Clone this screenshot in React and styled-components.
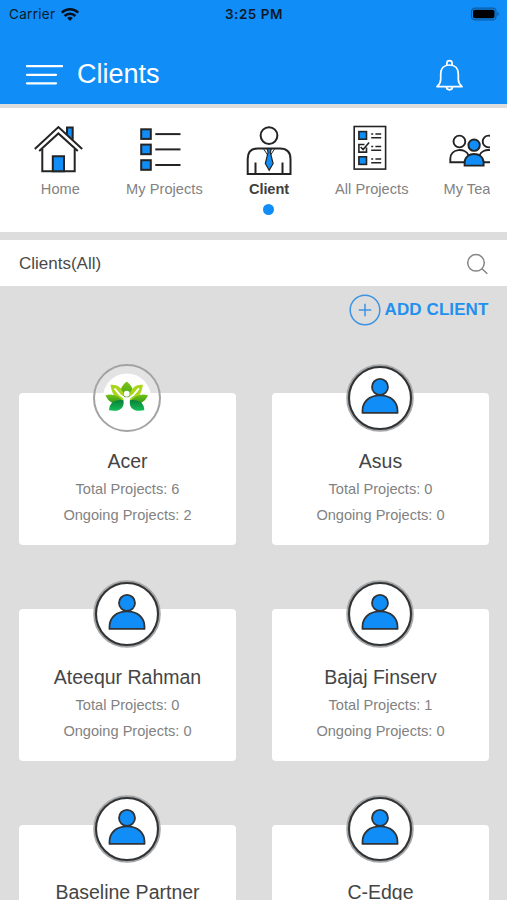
import React from 'react';
import styled, { createGlobalStyle } from 'styled-components';

const BLUE = '#118df7';
const INK = '#242424';

const GlobalStyle = createGlobalStyle`
    * {
        box-sizing: border-box;
    }

    body {
        margin: 0;
        background-color: #dddddd;
        font-family: "Liberation Sans", Arial, sans-serif;
    }
`;

const Screen = styled.div`
    width: 507px;
    height: 900px;
    overflow: hidden;
    background-color: #dddddd;
`;

const Header = styled.header`
    height: 104px;
    background-color: ${BLUE};
`;

const StatusBar = styled.div`
    display: grid;
    grid-template-columns: 1fr auto 1fr;
    align-items: center;
    height: 28px;
    padding: 0 7px 0 9px;
    font-family: Inter, sans-serif;
    font-size: 13.5px;
    line-height: 28px;
    color: #0b1a2a;
`;

const Carrier = styled.div`
    display: flex;
    align-items: center;
    gap: 6px;
    letter-spacing: 0.3px;
`;

const Clock = styled.div`
    padding-right: 1px;
    font-weight: 600;
    letter-spacing: 0.55px;
`;

const Battery = styled.div`
    display: flex;
    justify-content: flex-end;
`;

const TitleBar = styled.div`
    display: flex;
    align-items: center;
    height: 76px;
    padding: 0 43px 0 25px;
`;

const Title = styled.h1`
    flex: 1;
    height: 76px;
    margin: 0 0 0 13px;
    padding-top: 25px;
    font-size: 27px;
    font-weight: normal;
    line-height: 43px;
    color: #fff;
`;

const MenuIcon = styled.svg`
    margin-top: 17px;
`;

const BellIcon = styled.svg`
    margin-top: 18px;
`;

const Tabs = styled.nav`
    display: flex;
    height: 124px;
    margin-top: 4px;
    padding: 17px 17px 0 8px;
    background-color: #fff;
`;

const TabList = styled.div`
    display: flex;
    flex: 1;
    min-width: 0;
    overflow: hidden;
`;

const Tab = styled.div`
    display: flex;
    flex: 0 0 103.8px;
    flex-direction: column;
    align-items: center;
    padding-left: ${props => props.$active ? '3px' : '0'};
`;

const TabLabel = styled.span`
    margin-top: 6px;
    padding-left: ${props => props.$offset > 0 ? props.$offset : 0}px;
    padding-right: ${props => props.$offset < 0 ? -props.$offset : 0}px;
    font-size: 14.6px;
    font-weight: ${props => props.$active ? 'bold' : 'normal'};
    line-height: 17px;
    letter-spacing: ${props => props.$active ? '-0.1px' : '0.05px'};
    white-space: nowrap;
    color: ${props => props.$active ? '#404040' : '#828282'};
`;

const ActiveDot = styled.span`
    width: 11px;
    height: 11px;
    margin-top: 5.5px;
    border-radius: 50%;
    background-color: ${BLUE};
`;

const FilterBar = styled.div`
    display: flex;
    align-items: center;
    justify-content: space-between;
    height: 46px;
    margin-top: 8px;
    padding: 1px 19px 0;
    background-color: #fff;
    font-size: 17px;
    color: #4a4a4a;
`;

const AddClient = styled.div`
    display: flex;
    align-items: center;
    justify-content: flex-end;
    gap: 4px;
    height: 47px;
    padding-right: 18.5px;
    font-size: 17px;
    font-weight: bold;
    letter-spacing: 0.1px;
    color: #2290ee;
`;

const ClientGrid = styled.main`
    display: grid;
    grid-template-columns: 217px 217px;
    column-gap: 36px;
    row-gap: 63.7px;
    padding: 60.3px 18px 0 19px;
`;

const Card = styled.article`
    display: flex;
    flex-direction: column;
    align-items: center;
    height: 152px;
    border-radius: 4px;
    background-color: #fff;
`;

const Avatar = styled.div`
    width: 69px;
    height: 68px;
    flex-shrink: 0;
    margin-top: -29.3px;
`;

const ClientName = styled.h2`
    margin: 17px 0 0;
    font-size: 19.5px;
    font-weight: normal;
    line-height: 24px;
    color: #454545;
`;

const Stats = styled.div`
    display: grid;
    gap: 9px;
    margin-top: 8px;
    text-align: center;
`;

const Stat = styled.p`
    margin: 0;
    font-size: 14.6px;
    line-height: 17px;
    color: #828282;
`;

const HomeIcon = () => (
  <svg width="52" height="50" viewBox="0 0 52 50" fill="none" stroke={INK} strokeWidth="2">
    <path d="M33 9.5V2.4h5.7v12.3" fill={BLUE} />
    <path d="M8.3 24v22.3h32.4V24" />
    <path d="M18.8 46.3v-15H30v15z" fill={BLUE} />
    <path d="M.8 24 24.4 2l23.8 22M5.2 26 24.4 8.4 43.8 26" />
  </svg>
);

const ListIcon = () => (
  <svg width="52" height="50" viewBox="0 0 52 50" stroke={INK} strokeWidth="2">
    {[4.3, 19.6, 35.2].map((y) => (
      <React.Fragment key={y}>
        <rect x="3.2" y={y} width="9.6" height="9.6" fill={BLUE} />
        <path d={`M17.3 ${y + 4.8}h25.2`} />
      </React.Fragment>
    ))}
  </svg>
);

const ClientIcon = () => (
  <svg width="52" height="50" viewBox="0 0 52 50" fill="none" stroke={INK} strokeWidth="2">
    <circle cx="26" cy="10.6" r="8.4" />
    <path d="M4.7 49V34Q4.7 23.400 15 23.400h22Q47.500 23.400 47.500 34v15zM12.500 37.500v11.500M39.500 37.500v11.500" />
    <path d="m20.500 23.800 5.600 8.400 5.600-8.400" strokeWidth="1" />
    <path d="M24.200 24h4l-.9 3.300 2.800 11.200-3.900 6.800-3.900-6.800 2.800-11.200z" fill={BLUE} strokeWidth="1.200" />
  </svg>
);

const ChecklistIcon = () => (
  <svg width="52" height="50" viewBox="0 0 52 50" fill="none" stroke={INK} strokeWidth="1.6">
    <rect x="9.200" y="1.500" width="31.400" height="42.600" />
    <rect x="13.900" y="6.600" width="7.600" height="7.600" fill={BLUE} />
    <path d="M21.500 22.500v4.600h-7.600v-7.600h5.600M15.700 22l2.400 2.600 6-7" />
    <rect x="13.900" y="31.800" width="7.600" height="7.600" fill={BLUE} />
    {[9, 21.5, 34].map((y) => (
      <path key={y} d={`M26.200 ${y}h2M30.400 ${y}h5.800M26.200 ${y + 3.8}h10`} />
    ))}
  </svg>
);

const TeamIcon = () => (
  <svg width="52" height="50" viewBox="0 0 52 50" fill="none" stroke={INK} strokeWidth="1.9">
    <circle cx="10.400" cy="16.500" r="5.900" />
    <path d="M15.500 37.300H1.300v-3.500c0-10.500 15.200-11.500 18.300-3.500M34.400 37.300h14.400v-3.500c0-10.500-15.200-11.500-18.300-3.500" />
    <circle cx="39.600" cy="16.500" r="5.900" />
    <path d="M15.600 40.600v-3c0-11.500 19-11.500 19 0v3z" fill={BLUE} />
    <circle cx="25.100" cy="20.200" r="5.700" fill={BLUE} />
  </svg>
);

const Bell = () => (
  <BellIcon width="29" height="33" viewBox="0 0 29 33" fill="none" stroke="#fff" strokeWidth="1.7">
    <path d="M2 27.700h25c-3-2.800-3.700-4-3.700-7.200V15c0-5.600-3.300-9-8.800-9s-8.800 3.400-8.800 9v5.500c0 3.200-.7 4.400-3.700 7.200z" strokeLinejoin="round" />
    <path d="M11.900 6.300V4.200a2.600 2.600 0 0 1 5.200 0v2.100M11.500 27.800a3 3 0 0 0 6 0" />
  </BellIcon>
);

const Wifi = () => (
  <svg width="18" height="13" viewBox="0 0 18 13" fill="none" stroke="#06111d" strokeWidth="2.6">
    <path d="M.8 4.700a11.600 11.600 0 0 1 16.400 0M3.600 8a7.600 7.600 0 0 1 10.800 0" />
    <path d="m9 13-2.800-2.900a4 4 0 0 1 5.600 0z" fill="#06111d" stroke="none" />
  </svg>
);

const DefaultAvatar = () => (
  <svg width="68" height="68" viewBox="0 0 68 68" stroke="#303437" strokeWidth="1.8">
    <circle cx="34" cy="34" r="32.500" fill="#fff" stroke="#a6a6a6" strokeWidth="2.600" />
    <circle cx="34" cy="34" r="31" fill="#fff" strokeWidth="2.100" />
    <path d="M16.500 48.900v-2.200c0-8.700 6.600-15.300 17.500-15.300s17.500 6.600 17.500 15.300v2.200z" fill={BLUE} strokeLinejoin="round" />
    <circle cx="34" cy="22.900" r="8" fill={BLUE} />
  </svg>
);

const LeafAvatar = () => (
  <svg width="68" height="68" viewBox="0 0 68 68">
    <defs>
      <linearGradient id="leafTop" x1="0" y1="0" x2="0" y2="1">
        <stop offset="0" stopColor="#7cc312" />
        <stop offset="1" stopColor="#2f9c1d" />
      </linearGradient>
      <linearGradient id="leafMid" x1="0" y1="0" x2="0" y2="1">
        <stop offset="0" stopColor="#76c414" />
        <stop offset="1" stopColor="#238f20" />
      </linearGradient>
      <linearGradient id="leafLow" x1="0" y1="0" x2="0" y2="1">
        <stop offset="0" stopColor="#08803a" />
        <stop offset="1" stopColor="#15bd57" />
      </linearGradient>
    </defs>
    <circle cx="34" cy="34" r="33" fill="#fff" fillOpacity="0.18" stroke="#a3a3a3" strokeWidth="2" />
    <circle cx="34" cy="33.500" r="24" fill="#fff" />
    <path d="M33.700 17.500Q27 22.500 27 30l4.500 9h4.400l4.500-9Q40.400 22.500 33.700 17.500z" fill="url(#leafTop)" />
    <path d="M17.500 20.800q9.500-1 12.500 7.500l2 10.500q-12.500-3-14.500-18z" fill="#a9d51a" />
    <path d="M49.900 20.800q-9.500-1-12.500 7.500l-2 10.500q12.500-3 14.500-18z" fill="#a9d51a" />
    <path d="M12.300 31.500q10-3.500 18.500 6.500v2.500Q18 42.500 12.300 31.500z" fill="url(#leafMid)" />
    <path d="M55.100 31.500q-10-3.500-18.500 6.500v2.500Q49.400 42.500 55.100 31.500z" fill="url(#leafMid)" />
    <path d="M30.800 36.200Q16.500 34.500 16 46.300q15.500 2.700 14.800-10.100z" fill="url(#leafLow)" />
    <path d="M36.600 36.200Q50.900 34.500 51.400 46.300q-15.500 2.700-14.800-10.100z" fill="url(#leafLow)" />
    <path d="M22 25q4 6 9.700 9.300h4Q41.400 31 45.400 25" fill="none" stroke="#fff" strokeWidth="2" strokeLinecap="round" />
    <path d="M30 33q3.700 2 7.400 0-1.700 7.500.7 14h-8.800q2.400-6.500.7-14z" fill="#fff" />
    <circle cx="33.700" cy="29.800" r="3" fill="#fff" />
  </svg>
);

const tabs = [
  { label: 'Home', Icon: HomeIcon, offset: 1 },
  { label: 'My Projects', Icon: ListIcon, offset: 1.5 },
  { label: 'Client', Icon: ClientIcon, active: true },
  { label: 'All Projects', Icon: ChecklistIcon, offset: 1 },
  { label: 'My Team', Icon: TeamIcon, offset: -4 },
];

const clients = [
  { name: 'Acer', total: 6, ongoing: 2, logo: true },
  { name: 'Asus', total: 0, ongoing: 0 },
  { name: 'Ateequr Rahman', total: 0, ongoing: 0 },
  { name: 'Bajaj Finserv', total: 1, ongoing: 0 },
  { name: 'Baseline Partner', total: 0, ongoing: 0 },
  { name: 'C-Edge', total: 0, ongoing: 0 },
];

const ClientCard = ({ client }) => (
  <Card>
    <Avatar>{client.logo ? <LeafAvatar /> : <DefaultAvatar />}</Avatar>
    <ClientName>{client.name}</ClientName>
    <Stats>
      <Stat>Total Projects: {client.total}</Stat>
      <Stat>Ongoing Projects: {client.ongoing}</Stat>
    </Stats>
  </Card>
);

const App = () => {
  return (
    <Screen>
      <GlobalStyle />
      <Header>
        <StatusBar>
          <Carrier>Carrier <Wifi /></Carrier>
          <Clock>3:25 PM</Clock>
          <Battery>
            <svg width="30" height="14" viewBox="0 0 30 14">
              <rect x="1.500" y="1.200" width="24.500" height="11.600" rx="3.500" fill="none" stroke="#0d5ca3" strokeWidth="1.200" />
              <rect x="3" y="2.700" width="21.500" height="8.600" rx="1.800" fill="#000" />
              <path d="M27.300 4.800q3 2.200 0 4.400z" fill="#0d5ca3" />
            </svg>
          </Battery>
        </StatusBar>
        <TitleBar>
          <MenuIcon width="39" height="22" viewBox="0 0 39 22" stroke="#fff" strokeWidth="2.300" strokeLinecap="round">
            <path d="M2 2.200h35M2 10.800h29M2 19.300h29" />
          </MenuIcon>
          <Title>Clients</Title>
          <Bell />
        </TitleBar>
      </Header>

      <Tabs>
        <TabList>
          {tabs.map(({ label, Icon, active, offset = 0 }) => (
            <Tab key={label} $active={active}>
              <Icon />
              <TabLabel $active={active} $offset={offset}>{label}</TabLabel>
              {active && <ActiveDot />}
            </Tab>
          ))}
        </TabList>
      </Tabs>

      <FilterBar>
        <span>Clients(All)</span>
        <svg width="22" height="22" viewBox="0 0 22 22" fill="none" stroke="#858585" strokeWidth="1.500">
          <circle cx="10" cy="9.800" r="8.300" />
          <path d="m16 15.800 5.300 5" />
        </svg>
      </FilterBar>

      <AddClient>
        <svg width="32" height="32" viewBox="0 0 32 32" fill="none" stroke="#3c93e3" strokeWidth="1.500">
          <circle cx="16" cy="16" r="14.800" />
          <path d="M16 9.800v12.400M9.800 16h12.400" />
        </svg>
        ADD CLIENT
      </AddClient>

      <ClientGrid>
        {clients.map((client) => (
          <ClientCard key={client.name} client={client} />
        ))}
      </ClientGrid>
    </Screen>
  );
};

export default App;
